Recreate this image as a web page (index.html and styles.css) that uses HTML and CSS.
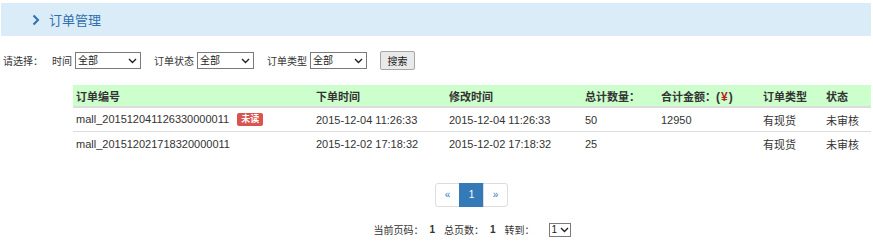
FILE: index.html
```html
<!DOCTYPE html>
<html lang="zh-CN">
<head>
    <meta charset="UTF-8">
    <title>订单管理</title>
    <link rel="stylesheet" href="styles.css">
</head>
<body>

<header class="page-title">
    <svg class="chevron" width="8" height="12" viewBox="0 0 8 12"><polyline points="1.5,1.5 6,6 1.5,10.5" fill="none" stroke="#2f6fae" stroke-width="2"/></svg>
    <span>订单管理</span>
</header>

<div class="filters">
    <span class="lead">请选择：</span>
    <label class="field">时间
        <span class="select-wrap w66">
            <select><option>全部</option></select>
            <svg class="arrow" width="9" height="6" viewBox="0 0 9 6"><polyline points="1,1 4.5,4.5 8,1" fill="none" stroke="#222" stroke-width="1.4"/></svg>
        </span>
    </label>
    <label class="field">订单状态
        <span class="select-wrap w57">
            <select><option>全部</option></select>
            <svg class="arrow" width="9" height="6" viewBox="0 0 9 6"><polyline points="1,1 4.5,4.5 8,1" fill="none" stroke="#222" stroke-width="1.4"/></svg>
        </span>
    </label>
    <label class="field">订单类型
        <span class="select-wrap w57">
            <select><option>全部</option></select>
            <svg class="arrow" width="9" height="6" viewBox="0 0 9 6"><polyline points="1,1 4.5,4.5 8,1" fill="none" stroke="#222" stroke-width="1.4"/></svg>
        </span>
    </label>
    <button class="search-btn">搜索</button>
</div>

<main class="content">
    <table class="orders">
        <colgroup>
            <col style="width:240px">
            <col style="width:133px">
            <col style="width:136px">
            <col style="width:76px">
            <col style="width:102px">
            <col style="width:63px">
            <col style="width:48px">
        </colgroup>
        <thead>
            <tr>
                <th>订单编号</th>
                <th>下单时间</th>
                <th>修改时间</th>
                <th>总计数量：</th>
                <th>合计金额：<span class="paren">(<span class="yen">¥</span>)</span></th>
                <th>订单类型</th>
                <th>状态</th>
            </tr>
        </thead>
        <tbody>
            <tr>
                <td>mall_201512041126330000011 <span class="badge">未读</span></td>
                <td>2015-12-04 11:26:33</td>
                <td>2015-12-04 11:26:33</td>
                <td>50</td>
                <td>12950</td>
                <td>有现货</td>
                <td>未审核</td>
            </tr>
            <tr>
                <td>mall_201512021718320000011</td>
                <td>2015-12-02 17:18:32</td>
                <td>2015-12-02 17:18:32</td>
                <td>25</td>
                <td></td>
                <td>有现货</td>
                <td>未审核</td>
            </tr>
        </tbody>
    </table>

    <ul class="pagination">
        <li><a href="#">«</a></li>
        <li class="active"><a href="#">1</a></li>
        <li><a href="#">»</a></li>
    </ul>

    <div class="page-info">
        <span>当前页码：</span><strong>1</strong>
        <span>总页数：</span><strong>1</strong>
        <span>转到：</span>
        <span class="select-wrap mini">
            <select><option>1</option></select>
            <svg class="arrow" width="9" height="6" viewBox="0 0 9 6"><polyline points="1,1 4.5,4.5 8,1" fill="none" stroke="#222" stroke-width="1.4"/></svg>
        </span>
    </div>
</main>

</body>
</html>
```

FILE: styles.css
```css
body {
    font-family: "Liberation Sans", "Noto Sans CJK SC", sans-serif;
    margin: 0;
    padding: 0;
    background-color: #fff;
    color: #333;
}
.page-title {
    margin: 3px 2px 0 1px;
    height: 33px;
    background-color: #d9ecf7;
    display: flex;
    align-items: center;
    padding-left: 31px;
    color: #2f6fae;
    font-size: 13px;
}
.page-title .chevron {
    margin-right: 9px;
}
.filters {
    display: flex;
    align-items: center;
    height: 18px;
    margin: 15px 0 0 3px;
    font-size: 10px;
    color: #333;
}
.filters .lead {
    margin-right: 9px;
}
.field {
    display: flex;
    align-items: center;
    gap: 3px;
    margin-right: 13px;
}
.select-wrap {
    position: relative;
    display: inline-block;
    height: 17px;
}
.select-wrap select {
    appearance: none;
    -webkit-appearance: none;
    width: 100%;
    height: 100%;
    margin: 0;
    padding: 0 0 0 2px;
    border: 1px solid #7a7a7a;
    border-radius: 0;
    background: #fff;
    font-family: inherit;
    font-size: 10px;
    color: #222;
}
.select-wrap .arrow {
    position: absolute;
    right: 4px;
    top: 6px;
    pointer-events: none;
}
.w66 { width: 66px; }
.w57 { width: 57px; }
.search-btn {
    margin-left: 0;
    width: 35px;
    height: 19px;
    padding: 0;
    border: 1px solid #a6a6a6;
    border-radius: 2px;
    background-color: #e9e9e9;
    font-family: inherit;
    font-size: 10px;
    color: #222;
}
.content {
    margin: 16px 2px 0 73px;
}
.orders {
    width: 798px;
    table-layout: fixed;
    border-collapse: collapse;
    font-size: 11px;
}
.orders th {
    background-color: #ccffcc;
    text-align: left;
    font-weight: bold;
    height: 21px;
    padding: 0 3px;
    border-bottom: 2px solid #ddd;
    white-space: nowrap;
}
.orders td {
    height: 23px;
    padding: 0 3px;
    border-top: 1px solid #ddd;
    white-space: nowrap;
}
.orders tbody tr:first-child td {
    border-top: none;
}
.paren {
    font-size: 12px;
    letter-spacing: 1px;
}
.yen {
    color: #b52222;
}
.badge {
    display: inline-block;
    margin-left: 5px;
    padding: 0 4px;
    height: 13px;
    line-height: 13px;
    font-size: 9px;
    font-weight: bold;
    color: #fff;
    background-color: #d9534f;
    border-radius: 2px;
    vertical-align: 1px;
}
.pagination {
    display: flex;
    justify-content: center;
    list-style: none;
    margin: 28px 0 0;
    padding: 0;
}
.pagination li a {
    display: block;
    width: 23px;
    height: 22px;
    line-height: 22px;
    text-align: center;
    border: 1px solid #ddd;
    margin-left: -1px;
    color: #337ab7;
    text-decoration: none;
    font-size: 10px;
}
.pagination li:first-child a {
    border-radius: 3px 0 0 3px;
}
.pagination li:last-child a {
    border-radius: 0 3px 3px 0;
}
.pagination li.active a {
    background-color: #337ab7;
    border-color: #337ab7;
    color: #fff;
}
.page-info {
    display: flex;
    justify-content: center;
    align-items: center;
    gap: 0;
    margin-top: 15px;
    font-size: 10px;
    color: #333;
}
.page-info strong {
    margin: 0 9px 0 6px;
}
.page-info .mini {
    width: 22px;
    height: 14px;
    margin-left: 14px;
}
.page-info .mini select {
    padding-left: 2px;
}
.page-info .mini .arrow {
    right: 2px;
    top: 4px;
}
```
